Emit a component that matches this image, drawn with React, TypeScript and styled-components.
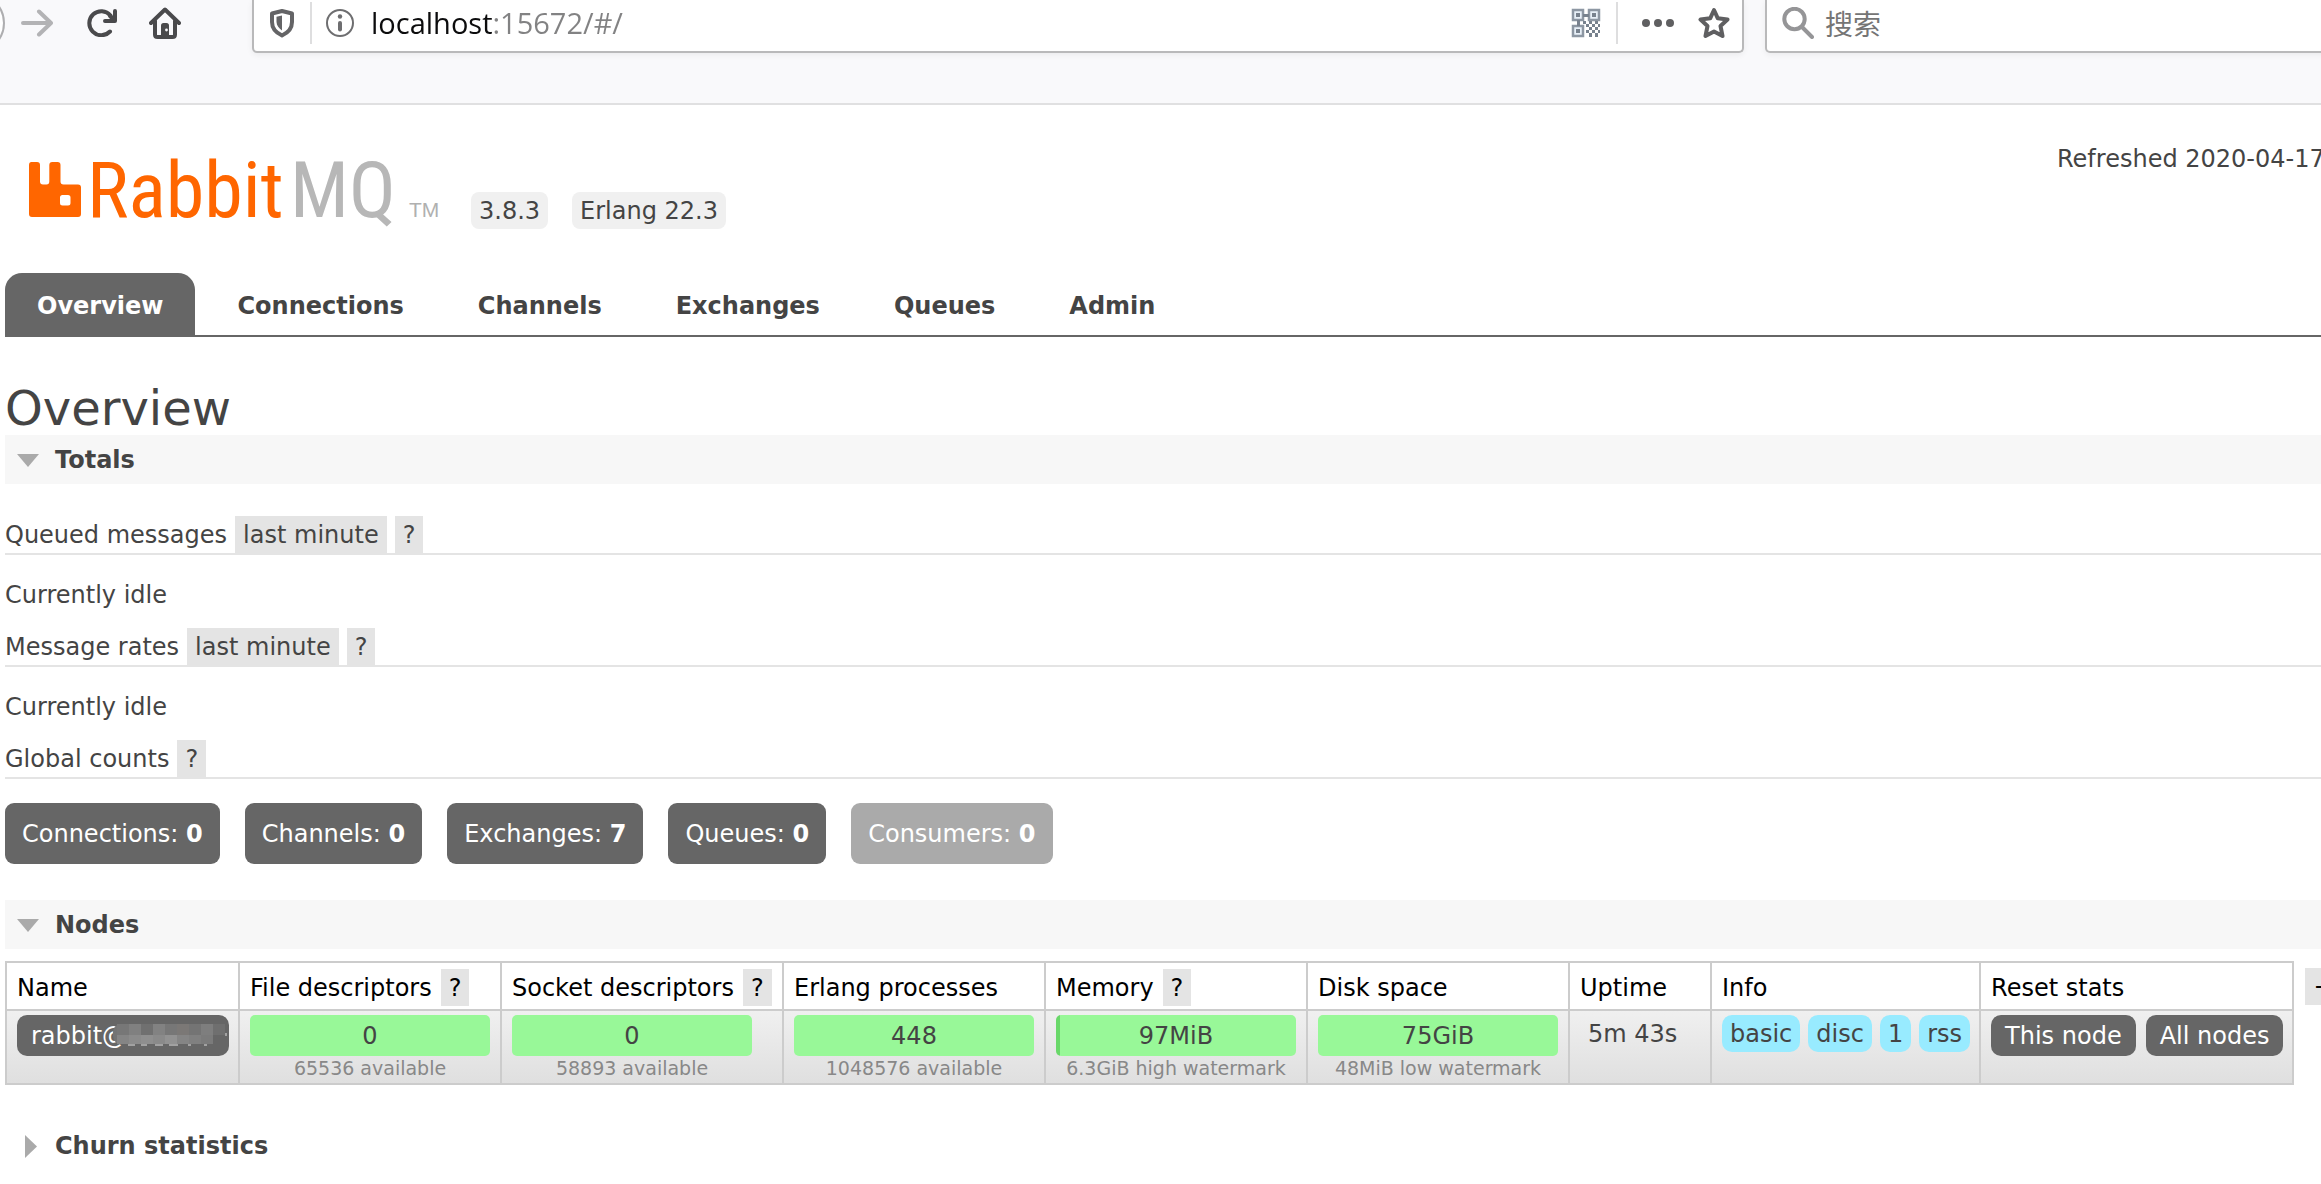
import React, { useState } from "react";
import styled, { createGlobalStyle, css } from "styled-components";

const GlobalStyle = createGlobalStyle`
  * {
    box-sizing: border-box;
  }

  body {
    margin: 0;
    overflow-x: hidden;
    background: #fff;
    color: #444;
    font: 24px/30px "DejaVu Sans", Verdana, sans-serif;
  }

  button,
  input {
    margin: 0;
    padding: 0;
    border: 0;
    background: none;
    color: inherit;
    font: inherit;
  }

  button {
    cursor: pointer;
    white-space: nowrap;
  }

  a {
    color: inherit;
    text-decoration: none;
  }
`;

/* ---------- browser chrome ---------- */

const Toolbar = styled.div`
  display: flex;
  align-items: flex-start;
  height: 105px;
  border-bottom: 2px solid #e0e0e1;
  background: #f9f9fb;
  overflow: hidden;
`;

const NavButtons = styled.div`
  display: flex;
  flex: none;
  align-items: center;
  width: 252px;
  height: 46px;
`;

const IconButton = styled.button`
  display: flex;
  flex: none;

  svg {
    display: block;
  }
`;

const BackButton = styled(IconButton)`
  width: 6px;
  margin-right: 15px;
`;

const ForwardButton = styled(IconButton)`
  margin-right: 33px;
`;

const ReloadButton = styled(IconButton)`
  margin-right: 31px;
`;

const field = css`
  display: flex;
  align-items: center;
  height: 53px;
  padding-bottom: 5px;
  border: 2px solid #b9b9ba;
  border-top: 0;
  border-radius: 0 0 5px 5px;
  background: #fff;
  box-shadow: 0 2px 6px rgba(0, 0, 0, 0.06);
`;

const UrlBar = styled.form`
  ${field}
  flex: 1;
  min-width: 0;
  padding-left: 15px;
  padding-right: 12px;
`;

const SearchBar = styled.form`
  ${field}
  flex: none;
  width: 600px;
  margin-left: 21px;
  margin-right: -44px;
  padding-left: 15px;
`;

const FieldDivider = styled.span`
  flex: none;
  width: 2px;
  height: 42px;
  margin: 0 14px 0 15px;
  background: #dededf;
`;

const UrlInput = styled.input`
  flex: 1;
  min-width: 0;
  height: 42px;
  margin: 0 16px 0 17px;
  outline: none;
  background: linear-gradient(90deg, #0c0c0d 122px, #828283 122px);
  background-clip: text;
  -webkit-background-clip: text;
  color: transparent;
  font: 29px/42px "Open Sans", "Noto Sans", sans-serif;
`;

const SearchInput = styled.input`
  flex: 1;
  min-width: 0;
  height: 42px;
  margin-left: 11px;
  outline: none;
  font: 28px/42px "Noto Sans CJK SC", sans-serif;

  &::placeholder {
    color: #757575;
    opacity: 1;
  }
`;

const UrlActions = styled.div`
  display: flex;
  flex: none;
  align-items: center;
`;

const MoreButton = styled(IconButton)`
  margin: 0 24px 0 10px;
`;

/* ---------- page header ---------- */

const Header = styled.header`
  display: flex;
  justify-content: space-between;
  padding: 39px 0 35px 28px;
`;

const Brand = styled.div`
  display: flex;
  align-items: flex-end;
  gap: 24px;
`;

const LogoLink = styled.a`
  display: block;

  svg {
    display: block;
  }
`;

const Version = styled.span`
  margin-bottom: 9px;
  padding: 2px 8px 0;
  border-radius: 8px;
  background: #f0f0f0;
  line-height: 35px;
`;

const Refreshed = styled.div`
  flex: none;
  width: 264px;
  white-space: nowrap;
`;

const Tabs = styled.nav`
  display: flex;
  gap: 10px;
  margin-left: 5px;
  border-bottom: 2px solid #666;
`;

const Tab = styled.a<{ $active?: boolean }>`
  padding: 18px 32px 14px;
  border-radius: 17px 17px 0 0;
  background: ${(p) => (p.$active ? "#666" : "transparent")};
  color: ${(p) => (p.$active ? "#fff" : "#444")};
  font-weight: bold;
`;

/* ---------- main ---------- */

const Main = styled.main`
  padding-left: 5px;
`;

const PageTitle = styled.h1`
  margin: 44px 0 0;
  font-size: 48px;
  font-weight: normal;
  line-height: 54px;
`;

const Section = styled.section`
  margin-bottom: 36px;
`;

const SectionTitle = styled.h2<{ $open: boolean }>`
  margin: 0;
  background: ${(p) => (p.$open ? "#f7f7f7" : "transparent")};
  font-size: 24px;
`;

const SectionToggle = styled.button`
  display: flex;
  align-items: center;
  width: 100%;
  padding-top: 2px;
  line-height: 47px;
  font-weight: bold;
  text-align: left;
`;

const Marker = styled.span<{ $open: boolean }>`
  display: flex;
  justify-content: center;
  width: 27px;
  margin: 0 14px 0 9px;
  padding-left: ${(p) => (p.$open ? 0 : 6)}px;
`;

const StatRow = styled.h3`
  display: flex;
  gap: 8px;
  margin: 0;
  border-bottom: 2px solid #e4e4e4;
  font-size: 24px;
  font-weight: normal;
`;

const StatName = styled.span`
  padding-top: 2px;
  line-height: 35px;
`;

const Stats = styled.div`
  padding-top: 32px;
`;

const Idle = styled.p`
  margin: 25px 0 18px;
`;

const Tag = styled.button`
  flex: none;
  padding: 2px 8px 0;
  background: #e4e4e4;
  line-height: 35px;
`;

const Counts = styled.div`
  display: flex;
  gap: 25px;
  margin-top: 24px;
`;

const Count = styled.a<{ $muted?: boolean }>`
  padding: 2px 17px 0;
  border-radius: 9px;
  background: ${(p) => (p.$muted ? "#aaa" : "#666")};
  color: #fff;
  line-height: 59px;
`;

const TableRow = styled.div`
  display: flex;
  align-items: flex-start;
  gap: 11px;
  margin-top: 12px;
`;

const NodeTable = styled.table`
  flex: none;
  border-collapse: collapse;
  white-space: nowrap;
`;

const HeadCell = styled.th<{ $width: number }>`
  width: ${(p) => p.$width}px;
  height: 48px;
  padding: 5px 9px 2px 10px;
  border: 2px solid #ccc;
  color: #000;
  font-weight: normal;
  text-align: left;
`;

const HeadLabel = styled.div`
  display: flex;
  gap: 9px;
`;

const NodeRow = styled.tr`
  background: linear-gradient(#f0f0f0, #dfdfdf);
`;

const Cell = styled.td`
  height: 74px;
  padding: 4px 9px 2px 10px;
  border: 2px solid #ccc;
  vertical-align: top;
`;

const UptimeCell = styled(Cell)`
  padding-top: 6px;
  padding-left: 18px;
  line-height: 35px;
`;

const Items = styled.div<{ $gap: number }>`
  display: flex;
  gap: ${(p) => p.$gap}px;
`;

const NodeLink = styled.a`
  display: block;
  position: relative;
  padding: 2px 14px 0;
  border-radius: 10px;
  background: #666;
  color: #fff;
  line-height: 39px;
`;

const Mosaic = styled.svg`
  position: absolute;
  top: 9px;
  left: 96px;
`;

const PillButton = styled.button`
  padding: 2px 14px 0;
  border-radius: 10px;
  background: #666;
  color: #fff;
  line-height: 39px;
`;

const Info = styled.abbr`
  padding: 2px 8px 0;
  border-radius: 10px;
  background: #98ebff;
  line-height: 35px;
`;

const Gauge = styled.div`
  width: 240px;
  text-align: center;
`;

const GaugeBar = styled.div<{ $fill: number }>`
  padding-top: 2px;
  border-radius: 5px;
  background: linear-gradient(90deg, #69d869 ${(p) => p.$fill}px, #98f898 ${(p) => p.$fill}px);
  line-height: 39px;
`;

const GaugeNote = styled.div`
  color: #888;
  font-size: 19px;
  line-height: 24px;
`;

const ColumnsButton = styled(Tag)`
  margin-top: 7px;
  color: #000;
`;

/* ---------- drawings ---------- */

const BackArc = () => (
  <svg width="6" height="46" viewBox="0 0 6 46" fill="none">
    <circle cx="-25" cy="23" r="29" fill="#fff" stroke="#aeaeb0" strokeWidth="2" />
  </svg>
);

const ForwardIcon = () => (
  <svg width="32" height="28" viewBox="0 0 32 28" fill="none" stroke="#b3b3b5" strokeWidth="4" strokeLinecap="round" strokeLinejoin="round">
    <path d="M2 14H29M18 2.500L30 14L18 25.500" />
  </svg>
);

const ReloadIcon = () => (
  <svg width="32" height="28" viewBox="0 0 32 28" fill="none" stroke="#4a4a4c" strokeWidth="4" strokeLinecap="round" strokeLinejoin="round">
    <path d="M24 22.500A12 12 0 1 1 24.500 6.500" />
    <path d="M29 2V12H19" />
    <path d="M24 7L28 11" />
  </svg>
);

const HomeIcon = () => (
  <svg width="32" height="32" viewBox="0 0 32 32" fill="none" stroke="#4a4a4c" strokeWidth="4" strokeLinecap="round" strokeLinejoin="round">
    <path d="M2 16L16 2.500L30 16" />
    <path d="M6 14V27.500Q6 30 8.500 30H23.500Q26 30 26 27.500V14" />
    <path d="M12 30V18.500Q12 16 14.500 16H17.500Q20 16 20 18.500V30Z" fill="#4a4a4c" stroke="none" />
    <circle cx="17.500" cy="23" r="1.400" fill="#f9f9fb" stroke="none" />
  </svg>
);

const ShieldIcon = () => (
  <svg width="26" height="30" viewBox="0 0 26 30" fill="none">
    <path d="M13 3L23 5.500V14C23 20.500 18.500 25 13 27.500C7.500 25 3 20.500 3 14V5.500Z" stroke="#646466" strokeWidth="4" strokeLinejoin="round" />
    <path d="M13 7.500V22.500C10 20.500 7.500 17.500 7.500 14V8.800Z" fill="#646466" />
  </svg>
);

const InfoIcon = () => (
  <svg width="28" height="28" viewBox="0 0 28 28" fill="none">
    <circle cx="14" cy="14" r="13" stroke="#6e6e70" strokeWidth="2" />
    <circle cx="14" cy="7.500" r="2.200" fill="#6e6e70" />
    <path d="M14 14V20.500" stroke="#6e6e70" strokeWidth="4" strokeLinecap="round" />
  </svg>
);

const QrIcon = () => (
  <svg width="30" height="30" viewBox="0 0 30 30" fill="none">
    <g stroke="#8d97a3" strokeWidth="2.500">
      <rect x="2" y="2" width="10" height="10" fill="#e8f0f8" />
      <rect x="18" y="2" width="10" height="10" fill="#e8f0f8" />
      <rect x="2" y="18" width="10" height="10" fill="#e8f0f8" />
    </g>
    <g fill="#78828e">
      <path d="M5 5h4v4H5zM21 5h4v4h-4zM5 21h4v4H5zM12 6h6v3h-6zM6 12h3v6H6z" />
      <path d="M12 13h3v3h-3zM18 13h3v3h-3zM24 13h3v3h-3zM15 16h3v3h-3zM21 16h3v3h-3zM27 16h2v3h-2zM18 19h3v3h-3zM24 19h3v3h-3zM15 22h3v3h-3zM21 22h3v3h-3zM27 22h2v3h-2zM18 25h3v4h-3zM24 25h3v4h-3z" />
    </g>
  </svg>
);

const DotsIcon = () => (
  <svg width="32" height="8" viewBox="0 0 32 8" fill="#5f5f61">
    <circle cx="4" cy="4" r="4" />
    <circle cx="16" cy="4" r="4" />
    <circle cx="28" cy="4" r="4" />
  </svg>
);

const StarIcon = () => (
  <svg width="32" height="32" viewBox="0 0 32 32" fill="none" stroke="#5f5f61" strokeWidth="4" strokeLinejoin="round">
    <path d="M16 3L19.800 11.300L29.500 12.500L22.500 19L24.500 29L16 24.500L7.500 29L9.500 19L2.500 12.500L12.200 11.300Z" />
  </svg>
);

const SearchIcon = () => (
  <svg width="32" height="32" viewBox="0 0 32 32" fill="none" stroke="#959597" strokeWidth="4" strokeLinecap="round">
    <circle cx="12.500" cy="12" r="10.200" />
    <path d="M20 20L30 30" />
  </svg>
);

const Logo = () => (
  <svg width="419" height="94" viewBox="0 -15 419 94" role="img" aria-label="RabbitMQ">
    <path
      fill="#f60"
      fillRule="evenodd"
      d="M3.500 3H9Q12 3 12 6V22.500Q12 25.500 15 25.500H18.500Q21.300 25.500 21.300 22.500V6Q21.300 3 24.300 3H29.500Q32.500 3 32.500 6V22.500Q32.500 25.500 35.500 25.500H50Q53 25.500 53 28.500V55Q53 58 50 58H4Q1 58 1 55V6Q1 3 3.500 3ZM34.500 36Q32 36 32 38.500V44Q32 46.500 34.500 46.500H40Q42.500 46.500 42.500 44V38.500Q42.500 36 40 36Z"
    />
    <g fontFamily='"Roboto Condensed", Roboto, sans-serif'>
      <text x="59" y="58" fontSize="78" fontWeight="400" fill="#f60">
        Rabbit
      </text>
      <text x="262" y="58" fontSize="78" fontWeight="400" fill="#b7b7b7">
        MQ
      </text>
    </g>
    <text x="381" y="58" fontSize="21" fontFamily='"Liberation Sans", Arial, sans-serif' fill="#b0b0b0">
      TM
    </text>
  </svg>
);

const Triangle = ({ open }: { open: boolean }) =>
  open ? (
    <svg width="22" height="13" viewBox="0 0 22 13" fill="#aaa">
      <path d="M0 0H22L11 13Z" />
    </svg>
  ) : (
    <svg width="12" height="23" viewBox="0 0 12 23" fill="#aaa">
      <path d="M0 0L12 11.500L0 23Z" />
    </svg>
  );

const mosaicRows = [
  ["#777", "#808080", "#707070", "#828282", "#777", "#7b7876", "#747474", "#7e7e7e", "#6f6f6f"],
  ["#858585", "#8b8b8b", "#8f8f8f", "#8a8a8a", "#929292", "#858585", "#808080", "#7b7b7b", "#666"],
];

const HostMosaic = () => (
  <Mosaic width="115" height="22" viewBox="0 0 115 22" aria-hidden="true">
    <rect width="112" height="20" rx="8" fill="#747474" />
    {mosaicRows.map((row, y) =>
      row.map((fill, x) => <rect key={`${y}-${x}`} x={4 + x * 12} y={y * 11} width="12" height={y ? 9 : 11} fill={fill} />)
    )}
    <path d="M15 21h7M28 21h6M42 21h8M56 21h9M75 21h3M91 21h3M113 9v3" stroke="#ddd" strokeWidth="1" />
  </Mosaic>
);

/* ---------- data ---------- */

const tabs = ["Overview", "Connections", "Channels", "Exchanges", "Queues", "Admin"];

const counts = [
  { label: "Connections", value: 0 },
  { label: "Channels", value: 0 },
  { label: "Exchanges", value: 7 },
  { label: "Queues", value: 0 },
  { label: "Consumers", value: 0, muted: true },
];

const columns = [
  { label: "Name", width: 233 },
  { label: "File descriptors", width: 262, help: true },
  { label: "Socket descriptors", width: 282, help: true },
  { label: "Erlang processes", width: 262 },
  { label: "Memory", width: 262, help: true },
  { label: "Disk space", width: 262 },
  { label: "Uptime", width: 142 },
  { label: "Info", width: 269 },
  { label: "Reset stats", width: 313 },
];

const gauges = [
  { value: "0", note: "65536 available", fill: 0 },
  { value: "0", note: "58893 available", fill: 0 },
  { value: "448", note: "1048576 available", fill: 0 },
  { value: "97MiB", note: "6.3GiB high watermark", fill: 4 },
  { value: "75GiB", note: "48MiB low watermark", fill: 0 },
];

const Help = () => <Tag aria-label="Help">?</Tag>;

function Panel({ title, initiallyOpen, children }: { title: string; initiallyOpen?: boolean; children?: React.ReactNode }) {
  const [open, setOpen] = useState(Boolean(initiallyOpen));
  return (
    <Section>
      <SectionTitle $open={open}>
        <SectionToggle aria-expanded={open} onClick={() => setOpen(!open)}>
          <Marker $open={open}>
            <Triangle open={open} />
          </Marker>
          {title}
        </SectionToggle>
      </SectionTitle>
      {open && children}
    </Section>
  );
}

export default function App() {
  return (
    <>
      <GlobalStyle />
      <Toolbar>
        <NavButtons>
          <BackButton aria-label="Back"><BackArc /></BackButton>
          <ForwardButton aria-label="Forward"><ForwardIcon /></ForwardButton>
          <ReloadButton aria-label="Reload"><ReloadIcon /></ReloadButton>
          <IconButton aria-label="Home"><HomeIcon /></IconButton>
        </NavButtons>
        <UrlBar onSubmit={(e) => e.preventDefault()}>
          <IconButton type="button" aria-label="Tracking protection"><ShieldIcon /></IconButton>
          <FieldDivider />
          <IconButton type="button" aria-label="Site information"><InfoIcon /></IconButton>
          <UrlInput aria-label="Address" defaultValue="localhost:15672/#/" />
          <UrlActions>
            <IconButton type="button" aria-label="QR code"><QrIcon /></IconButton>
            <FieldDivider />
            <MoreButton type="button" aria-label="Page actions"><DotsIcon /></MoreButton>
            <IconButton type="button" aria-label="Bookmark"><StarIcon /></IconButton>
          </UrlActions>
        </UrlBar>
        <SearchBar onSubmit={(e) => e.preventDefault()}>
          <SearchIcon />
          <SearchInput aria-label="搜索" placeholder="搜索" />
        </SearchBar>
      </Toolbar>

      <Header>
        <Brand>
          <LogoLink href="#/"><Logo /></LogoLink>
          <Version>3.8.3</Version>
          <Version>Erlang 22.3</Version>
        </Brand>
        <Refreshed>Refreshed 2020-04-17</Refreshed>
      </Header>

      <Tabs>
        {tabs.map((name, i) => (
          <Tab key={name} href="#/" $active={i === 0}>{name}</Tab>
        ))}
      </Tabs>

      <Main>
        <PageTitle>Overview</PageTitle>

        <Panel title="Totals" initiallyOpen>
          <Stats>
            <StatRow>
              <StatName>Queued messages</StatName>
              <Tag>last minute</Tag>
              <Help />
            </StatRow>
            <Idle>Currently idle</Idle>
            <StatRow>
              <StatName>Message rates</StatName>
              <Tag>last minute</Tag>
              <Help />
            </StatRow>
            <Idle>Currently idle</Idle>
            <StatRow>
              <StatName>Global counts</StatName>
              <Help />
            </StatRow>
            <Counts>
              {counts.map((c) => (
                <Count key={c.label} href="#/" $muted={c.muted}>
                  {c.label}: <b>{c.value}</b>
                </Count>
              ))}
            </Counts>
          </Stats>
        </Panel>

        <Panel title="Nodes" initiallyOpen>
          <TableRow>
            <NodeTable>
              <thead>
                <tr>
                  {columns.map((c) => (
                    <HeadCell key={c.label} $width={c.width}>
                      <HeadLabel>
                        <StatName>{c.label}</StatName>
                        {c.help && <Help />}
                      </HeadLabel>
                    </HeadCell>
                  ))}
                </tr>
              </thead>
              <tbody>
                <NodeRow>
                  <Cell>
                    <NodeLink href="#/">
                      rabbit@
                      <HostMosaic />
                    </NodeLink>
                  </Cell>
                  {gauges.map((g) => (
                    <Cell key={g.note}>
                      <Gauge>
                        <GaugeBar $fill={g.fill}>{g.value}</GaugeBar>
                        <GaugeNote>{g.note}</GaugeNote>
                      </Gauge>
                    </Cell>
                  ))}
                  <UptimeCell>5m 43s</UptimeCell>
                  <Cell>
                    <Items $gap={8}>
                      <Info>basic</Info>
                      <Info>disc</Info>
                      <Info>1</Info>
                      <Info>rss</Info>
                    </Items>
                  </Cell>
                  <Cell>
                    <Items $gap={10}>
                      <PillButton>This node</PillButton>
                      <PillButton>All nodes</PillButton>
                    </Items>
                  </Cell>
                </NodeRow>
              </tbody>
            </NodeTable>
            <ColumnsButton aria-label="Choose columns">+/-</ColumnsButton>
          </TableRow>
        </Panel>

        <Panel title="Churn statistics" />
      </Main>
    </>
  );
}
